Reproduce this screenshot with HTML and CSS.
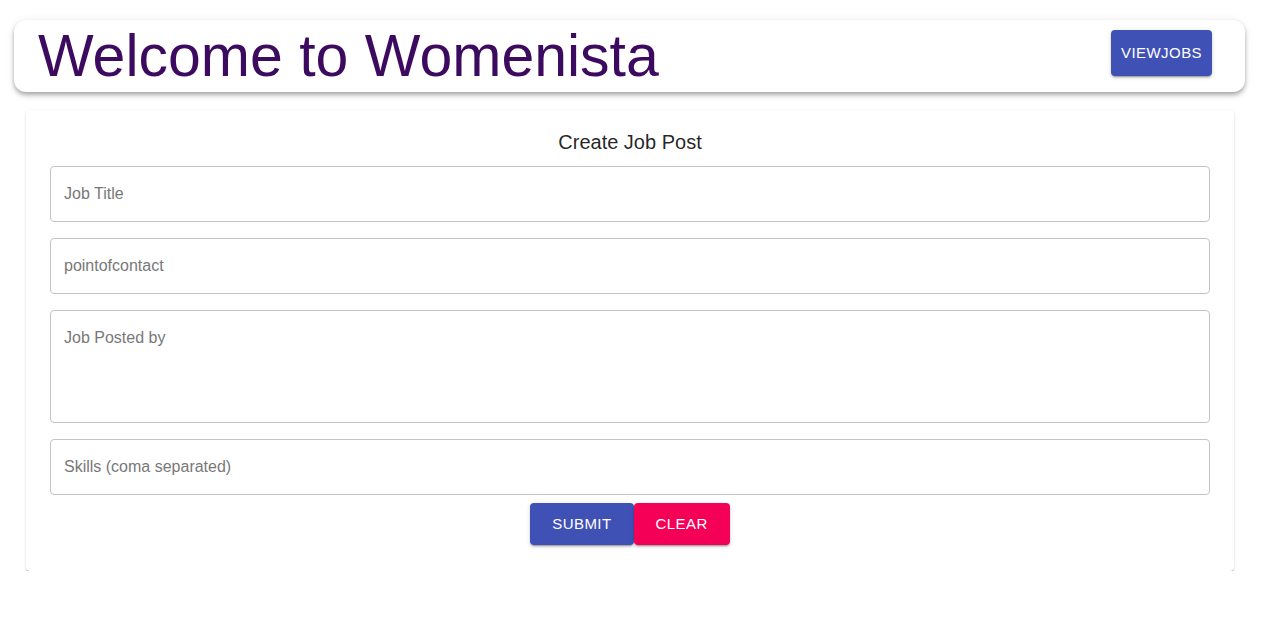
FILE: index.html
```html
<!DOCTYPE html>
<html lang="en">
<head>
<meta charset="utf-8">
<title>Womenista</title>
<link rel="stylesheet" href="styles.css">
</head>
<body>
<div class="page">
  <header class="topbar">
    <h1 class="brand">Welcome to Womenista</h1>
    <button class="btn btn-primary btn-top" type="button">ViewJobs</button>
  </header>
  <main class="card">
    <h2 class="card-title">Create Job Post</h2>
    <form class="form">
      <div class="field"><input class="input" type="text" placeholder="Job Title"></div>
      <div class="field"><input class="input" type="text" placeholder="pointofcontact"></div>
      <div class="field"><textarea class="input textarea" rows="4" placeholder="Job Posted by"></textarea></div>
      <div class="field"><input class="input" type="text" placeholder="Skills (coma separated)"></div>
      <div class="actions">
        <button class="btn btn-large btn-primary" type="button">Submit</button>
        <button class="btn btn-large btn-secondary" type="button">Clear</button>
      </div>
    </form>
  </main>
</div>
</body>
</html>
```
FILE: styles.css
```css
* { box-sizing: border-box; }
html, body { margin: 0; padding: 0; background: #fff; }
body { font-family: "Liberation Sans", Arial, sans-serif; }

.page {
  width: 1245px;
  padding: 20px 0 0 14px;
}

.topbar {
  display: flex;
  justify-content: space-between;
  align-items: flex-start;
  height: 72px;
  padding: 0 33px 0 24px;
  background: #fff;
  border-radius: 12px;
  box-shadow: 0 2px 4px -1px rgba(0,0,0,0.25), 0 4px 5px 0 rgba(0,0,0,0.16), 0 1px 10px 0 rgba(0,0,0,0.08);
}

.brand {
  margin: 0;
  font-size: 59px;
  line-height: 72px;
  font-weight: 400;
  color: #3c0a5e;
  white-space: nowrap;
}

.btn {
  font-family: "Liberation Sans", Arial, sans-serif;
  font-size: 15px;
  line-height: 1.75;
  letter-spacing: 0.43px;
  text-transform: uppercase;
  color: #fff;
  border: 0;
  border-radius: 4px;
  cursor: pointer;
  box-shadow: 0 3px 1px -2px rgba(0,0,0,0.2), 0 2px 2px 0 rgba(0,0,0,0.14), 0 1px 5px 0 rgba(0,0,0,0.12);
}

.btn-top {
  margin-top: 10px;
  padding: 10px;
}

.btn-large { padding: 8px 22px; }
.btn-primary { background: #3f51b5; }
.btn-secondary { background: #f50057; }

.card {
  display: block;
  margin: 18px 11px 0 12px;
  padding: 16px 24px 26px;
  background: #fff;
  border-radius: 4px;
  box-shadow: 0 2px 1px -1px rgba(0,0,0,0.28), 0 1px 1px 0 rgba(0,0,0,0.14), 0 1px 3px 0 rgba(0,0,0,0.12);
}

.card-title {
  margin: 0 0 8px;
  text-align: center;
  font-size: 20px;
  line-height: 32px;
  font-weight: 400;
  color: rgba(0,0,0,0.87);
}

.form {
  display: flex;
  flex-direction: column;
  gap: 16px;
}

.field { display: flex; }

.input {
  width: 100%;
  height: 56px;
  padding: 18.5px 14px 18.5px 13px;
  border: 1px solid #c4c4c4;
  border-radius: 4px;
  font-family: "Liberation Sans", Arial, sans-serif;
  font-size: 16px;
  line-height: 19px;
  color: rgba(0,0,0,0.87);
  background: #fff;
  outline: none;
}

.textarea {
  height: 113px;
  padding-top: 16.5px;
  resize: none;
}

.input::placeholder { color: #787878; opacity: 1; }

.actions {
  display: flex;
  justify-content: center;
  margin-top: -8px;
}
```
